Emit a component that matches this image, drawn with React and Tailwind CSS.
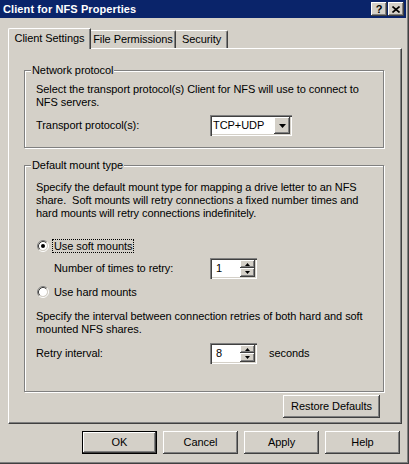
import React from 'react';

const raised = "shadow-[inset_-1px_-1px_0_#404040,inset_1px_1px_0_#fff,inset_-2px_-2px_0_#808080]";
const sunken = "shadow-[inset_1px_1px_0_#808080,inset_2px_2px_0_#404040,inset_-1px_-1px_0_#fff,inset_-2px_-2px_0_#d4d0c8]";

function Btn({ children, def, className = '' }) {
  return (
    <div className={`bg-[#d4d0c8] ${def ? 'border border-black' : ''} ${className}`}>
      <div className={`w-full h-full flex items-center justify-center ${raised}`}>{children}</div>
    </div>
  );
}

function Radio({ checked }) {
  return (
    <svg width="12" height="12" viewBox="0 0 12 12" className="shrink-0">
      <circle cx="6" cy="6" r="4" fill="#fff" />
      <path d="M2.11 9.89A5.5 5.5 0 0 1 9.89 2.11" stroke="#808080" fill="none" />
      <path d="M9.89 2.11A5.5 5.5 0 0 1 2.11 9.89" stroke="#fff" fill="none" />
      <path d="M2.82 9.18A4.5 4.5 0 0 1 9.18 2.82" stroke="#404040" fill="none" />
      <path d="M9.18 2.82A4.5 4.5 0 0 1 2.82 9.18" stroke="#d4d0c8" fill="none" />
      {checked && <circle cx="6" cy="6" r="2" fill="#000" />}
    </svg>
  );
}

function Tri({ up, w = 7, h = 4 }) {
  return (
    <svg width={w} height={h} viewBox={`0 0 ${w} ${h}`}>
      {up
        ? <polygon points={`${w / 2},0 ${w},${h} 0,${h}`} fill="#000" />
        : <polygon points={`0,0 ${w},0 ${w / 2},${h}`} fill="#000" />}
    </svg>
  );
}

function Spin({ value }) {
  return (
    <div className={`w-[47px] h-[21px] bg-white flex items-stretch p-[2px] ${sunken}`}>
      <div className="flex-1 pl-[4px] flex items-center">{value}</div>
      <div className="w-[15px] flex flex-col">
        <div className={`h-[8px] bg-[#d4d0c8] flex items-center justify-center ${raised}`}><Tri up w={5} h={3} /></div>
        <div className={`h-[9px] bg-[#d4d0c8] flex items-center justify-center ${raised}`}><Tri w={5} h={3} /></div>
      </div>
    </div>
  );
}

function Group({ label, className = '', children }) {
  return (
    <div className={`relative w-[360px] border border-[#808080] shadow-[inset_1px_1px_0_#fff,1px_1px_0_#fff] ${className}`}>
      <span className="absolute left-[6px] -top-[7px] bg-[#d4d0c8] px-[1px]">{label}</span>
      {children}
    </div>
  );
}

export default function App() {
  return (
    <div className="w-[409px] h-[464px] bg-[#d4d0c8] overflow-hidden flex flex-col font-['Liberation_Sans',Arial,sans-serif] text-[11px] leading-[13px] tracking-[-0.07px] text-black shadow-[inset_-1px_-1px_0_#404040,inset_-2px_-2px_0_#808080]">
      <div className="w-[406px] h-[18px] bg-[#0a246a] flex items-center justify-between pl-[3px] pr-[2px]">
        <span className="text-white font-bold tracking-[0.1px]">Client for NFS Properties</span>
        <div className="flex gap-[1px]">
          <Btn className="w-[16px] h-[14px]"><span className="font-bold text-[11px] leading-[11px]">?</span></Btn>
          <Btn className="w-[16px] h-[14px]">
            <svg width="8" height="7" viewBox="0 0 8 7">
              <path d="M0.5 0.5L7.5 6.5M7.5 0.5L0.5 6.5" stroke="#000" strokeWidth="1.6" />
            </svg>
          </Btn>
        </div>
      </div>

      <div className="mt-[10px] ml-[8px] h-[20px] flex items-end">
        <div className="relative z-10 h-[21px] w-[83px] -mb-px bg-[#d4d0c8] border-l border-t border-white rounded-tl-[2px] border-r border-r-[#404040] shadow-[inset_-1px_0_0_#808080] flex items-start justify-center pt-[3px]">
          Client Settings
        </div>
        <div className="h-[18px] w-[85px] border-t border-white border-r border-r-[#404040] shadow-[inset_-1px_0_0_#808080] rounded-tr-[2px] flex items-start justify-center pt-[2px]">
          File Permissions
        </div>
        <div className="h-[18px] w-[52px] border-t border-white border-r border-r-[#404040] shadow-[inset_-1px_0_0_#808080] rounded-tr-[2px] flex items-start justify-center pt-[2px]">
          Security
        </div>
      </div>

      <div className="ml-[8px] w-[394px] h-[376px] border-l border-t border-white border-r border-b border-r-[#404040] border-b-[#404040] shadow-[inset_-1px_-1px_0_#808080] flex flex-col pl-[15px] pt-[21px]">
        <Group label="Network protocol" className="pl-[11px] pt-[12px] pb-[11px]">
          <p className="whitespace-nowrap">
            Select the transport protocol(s) Client for NFS will use to connect to<br />NFS servers.
          </p>
          <div className="mt-[6px] flex items-center">
            <span className="w-[174px]">Transport protocol(s):</span>
            <div className={`w-[82px] h-[21px] bg-white flex p-[2px] ${sunken}`}>
              <div className="flex-1 pl-[1px] flex items-center">TCP+UDP</div>
              <div className={`w-[16px] bg-[#d4d0c8] flex items-center justify-center ${raised}`}><Tri /></div>
            </div>
          </div>
        </Group>

        <Group label="Default mount type" className="mt-[17px] pl-[11px] pt-[15px] pb-[27px]">
          <p className="whitespace-nowrap">
            Specify the default mount type for mapping a drive letter to an NFS<br />
            share.&nbsp; Soft mounts will retry connections a fixed number times and<br />
            hard mounts will retry connections indefinitely.
          </p>
          <div className="mt-[18px] h-[16px] flex items-center pl-[1px]">
            <Radio checked />
            <span className="ml-[3px] border border-dotted border-black px-[1px] leading-[12px]">Use soft mounts</span>
          </div>
          <div className="mt-[4px] flex items-center pl-[18px]">
            <span className="w-[156px]">Number of times to retry:</span>
            <Spin value="1" />
          </div>
          <div className="mt-[5px] h-[16px] flex items-center pl-[1px]">
            <Radio />
            <span className="ml-[5px]">Use hard mounts</span>
          </div>
          <p className="mt-[10px] whitespace-nowrap">
            Specify the interval between connection retries of both hard and soft<br />mounted NFS shares.
          </p>
          <div className="mt-[7px] flex items-center">
            <span className="w-[174px]">Retry interval:</span>
            <Spin value="8" />
            <span className="ml-[12px]">seconds</span>
          </div>
        </Group>

        <div className="w-[360px] mt-[3px] flex justify-end pr-[4px]">
          <Btn className="w-[97px] h-[23px]">Restore Defaults</Btn>
        </div>
      </div>

      <div className="mt-[7px] ml-[8px] w-[394px] flex justify-end gap-[6px] pr-[2px]">
        <Btn def className="w-[75px] h-[23px]">OK</Btn>
        <Btn className="w-[75px] h-[23px]">Cancel</Btn>
        <Btn className="w-[75px] h-[23px]">Apply</Btn>
        <Btn className="w-[75px] h-[23px]">Help</Btn>
      </div>
    </div>
  );
}
